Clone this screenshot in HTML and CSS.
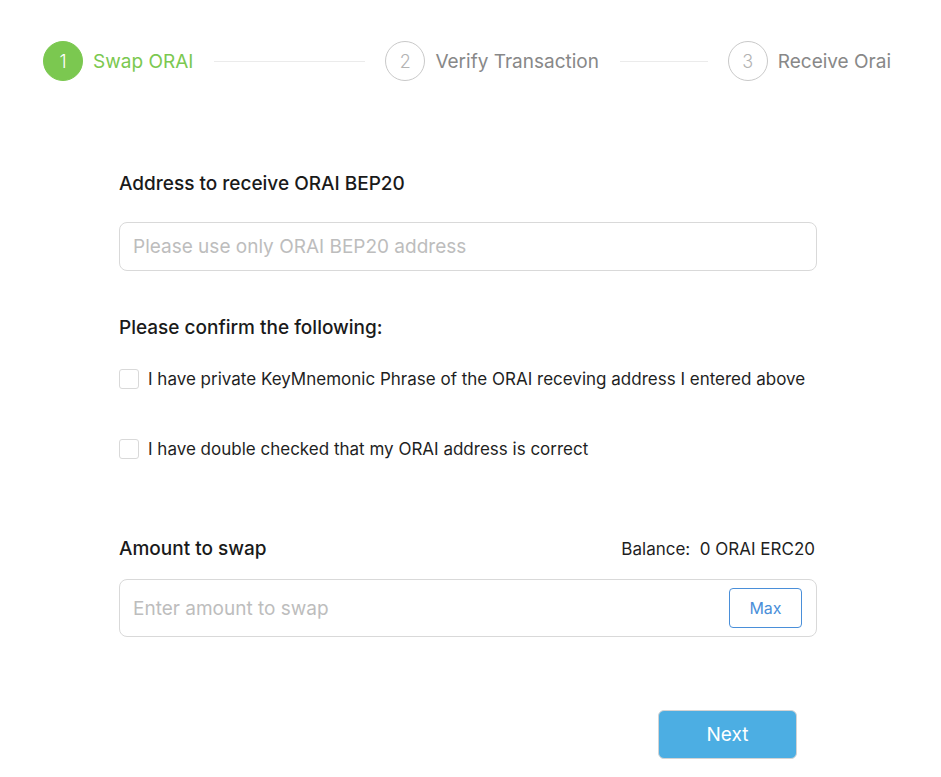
FILE: index.html
```html
<!DOCTYPE html>
<html>
<head>
<meta charset="utf-8">
<link rel="stylesheet" href="styles.css">
</head>
<body>
<div class="page">
  <div class="steps">
    <div class="step active">
      <div class="step-icon">1</div>
      <div class="step-title">Swap ORAI</div>
      <div class="step-line"></div>
    </div>
    <div class="step">
      <div class="step-icon">2</div>
      <div class="step-title">Verify Transaction</div>
      <div class="step-line"></div>
    </div>
    <div class="step last">
      <div class="step-icon">3</div>
      <div class="step-title">Receive Orai</div>
    </div>
  </div>

  <div class="form">
    <div class="label label-address">Address to receive ORAI BEP20</div>
    <div class="input input-address"><span class="placeholder">Please use only ORAI BEP20 address</span></div>

    <div class="label label-confirm">Please confirm the following:</div>
    <label class="check-row first"><span class="checkbox"></span><span class="check-text">I have private KeyMnemonic Phrase of the ORAI receving address I entered above</span></label>
    <label class="check-row second"><span class="checkbox"></span><span class="check-text">I have double checked that my ORAI address is correct</span></label>

    <div class="amount-head">
      <div class="label">Amount to swap</div>
      <div class="balance">Balance:&nbsp; 0 ORAI ERC20</div>
    </div>
    <div class="input input-amount">
      <span class="placeholder">Enter amount to swap</span>
      <button class="max-btn">Max</button>
    </div>

    <div class="actions">
      <button class="next-btn">Next</button>
    </div>
  </div>
</div>
</body>
</html>
```

FILE: styles.css
```css
* { box-sizing: border-box; }
html, body { margin: 0; padding: 0; background: #fff; }
body {
  font-family: Inter, "Noto Sans", "Liberation Sans", sans-serif;
  color: #1c1c1c;
}
.page {
  width: 941px;
  padding: 41px 50px 0 43px;
}
.steps {
  display: flex;
  align-items: center;
}
.step {
  flex: 1;
  display: flex;
  align-items: center;
  min-width: 0;
}
.step.last { flex: none; }
.step-icon {
  width: 40px;
  height: 40px;
  border-radius: 50%;
  border: 1px solid #c9c9c9;
  color: #b3b3b3;
  font-size: 18px;
  font-weight: 300;
  display: flex;
  align-items: center;
  justify-content: center;
  flex: none;
}
.step.active .step-icon {
  background: #7bc850;
  border-color: #7bc850;
  color: #fff;
}
.step-title {
  margin-left: 10px;
  font-size: 19px;
  color: #888;
  white-space: nowrap;
}
.step.active .step-title { color: #7bc850; }
.step-line {
  flex: 1;
  height: 1px;
  background: #ebebeb;
  margin: 0 20px 0 21px;
}

.form {
  width: 698px;
  margin: 91px 0 0 76px;
}
.label {
  font-size: 19px;
  font-weight: 500;
  line-height: 24px;
  color: #1a1a1a;
}
.input {
  border: 1px solid #d9d9d9;
  border-radius: 8px;
  display: flex;
  align-items: center;
  padding: 0 14px 0 13px;
}
.placeholder {
  font-size: 19px;
  color: #bdbdbd;
  flex: 1;
}
.input-address {
  margin-top: 26px;
  height: 49px;
}
.label-confirm { margin-top: 45px; }
.check-row {
  display: flex;
  align-items: center;
  height: 24px;
}
.check-row.first { margin-top: 27px; }
.check-row.second { margin-top: 46px; }
.checkbox {
  width: 20px;
  height: 20px;
  border: 1px solid #d9d9d9;
  border-radius: 3px;
  flex: none;
}
.check-text {
  margin-left: 9px;
  font-size: 17px;
  color: #1f1f1f;
}
.amount-head {
  margin-top: 76px;
  display: flex;
  justify-content: space-between;
  align-items: center;
}
.balance {
  font-size: 17px;
  color: #1f1f1f;
  margin-right: 2px;
}
.input-amount {
  margin-top: 18px;
  height: 58px;
}
.max-btn {
  width: 73px;
  height: 40px;
  border: 1px solid #4a8fd9;
  border-radius: 4px;
  background: #fff;
  color: #4a8fd9;
  font-family: inherit;
  font-size: 16px;
  padding: 0;
}
.actions {
  display: flex;
  justify-content: flex-end;
  margin-top: 73px;
  padding-right: 20px;
}
.next-btn {
  width: 139px;
  height: 49px;
  background: #4caee3;
  border: 1px solid #d3d3d3;
  border-radius: 6px;
  color: #fff;
  font-family: inherit;
  font-size: 19px;
  padding: 0;
}
```
